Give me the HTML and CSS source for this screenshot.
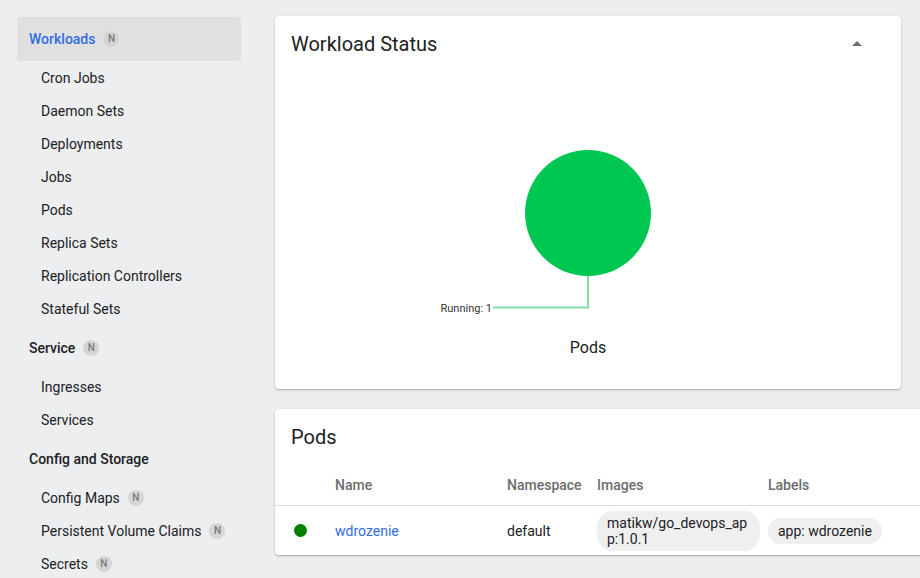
FILE: index.html
```html
<!DOCTYPE html>
<html>
<head>
<meta charset="utf-8">
<link rel="stylesheet" href="styles.css">
</head>
<body>
<div class="app">
  <nav class="sidebar">
    <div class="nav-header active"><span>Workloads</span><span class="badge">N</span></div>
    <div class="nav-item">Cron Jobs</div>
    <div class="nav-item">Daemon Sets</div>
    <div class="nav-item">Deployments</div>
    <div class="nav-item">Jobs</div>
    <div class="nav-item">Pods</div>
    <div class="nav-item">Replica Sets</div>
    <div class="nav-item">Replication Controllers</div>
    <div class="nav-item">Stateful Sets</div>
    <div class="nav-header group"><span>Service</span><span class="badge">N</span></div>
    <div class="nav-item">Ingresses</div>
    <div class="nav-item">Services</div>
    <div class="nav-header group"><span>Config and Storage</span></div>
    <div class="nav-item"><span>Config Maps</span><span class="badge">N</span></div>
    <div class="nav-item"><span>Persistent Volume Claims</span><span class="badge">N</span></div>
    <div class="nav-item"><span>Secrets</span><span class="badge">N</span></div>
  </nav>
  <main class="main">
    <section class="card status-card">
      <div class="card-header">
        <h2 class="card-title">Workload Status</h2>
        <svg class="caret" width="24" height="24" viewBox="0 0 24 24"><path d="M7 14l5-5 5 5z" fill="#6f6f6f"/></svg>
      </div>
      <svg class="chart" width="626" height="317" viewBox="0 0 626 317">
        <circle cx="313" cy="141" r="63" fill="#00c752"/>
        <polyline points="313,204 313,235.5 218,235.5" fill="none" stroke="#80e0a8" stroke-width="2"/>
        <text x="217" y="240" text-anchor="end" class="chart-label">Running: 1</text>
        <text x="313" y="281" text-anchor="middle" class="chart-title">Pods</text>
      </svg>
    </section>
    <section class="card pods-card">
      <div class="card-header">
        <h2 class="card-title">Pods</h2>
      </div>
      <div class="table">
        <div class="row head">
          <div class="c-status"></div>
          <div class="c-name">Name</div>
          <div class="c-ns">Namespace</div>
          <div class="c-img">Images</div>
          <div class="c-lbl">Labels</div>
        </div>
        <div class="row body">
          <div class="c-status"><span class="dot"></span></div>
          <div class="c-name"><a class="link">wdrozenie</a></div>
          <div class="c-ns">default</div>
          <div class="c-img"><span class="chip chip-wrap">matikw/go_devops_app:1.0.1</span></div>
          <div class="c-lbl"><span class="chip">app: wdrozenie</span></div>
        </div>
      </div>
    </section>
  </main>
</div>
</body>
</html>
```

FILE: styles.css
```css
* { box-sizing: border-box; }
html, body { margin: 0; padding: 0; }
body {
  width: 920px;
  height: 578px;
  overflow: hidden;
  background: #edeef0;
  font-family: Roboto, "Noto Sans", sans-serif;
  color: #202124;
  font-size: 14px;
}
.app { display: flex; align-items: flex-start; width: 920px; height: 578px; overflow: hidden; }
.sidebar {
  width: 241px;
  padding: 17px 0 0 17px;
  flex: none;
  display: flex;
  flex-direction: column;
}
.nav-header {
  height: 44px;
  display: flex;
  align-items: center;
  padding-left: 12px;
  font-weight: 500;
  font-size: 14px;
  color: #202124;
  border-radius: 3px;
}
.nav-header.group { margin-top: 1px; }
.nav-header.active { background: #e0e0e0; color: #326de6; }
.nav-item {
  height: 33px;
  display: flex;
  align-items: center;
  padding-left: 24px;
  font-size: 14px;
  color: #202124;
}
.badge {
  margin-left: 8px;
  width: 16px;
  height: 16px;
  border-radius: 50%;
  background: #d5d5d5;
  color: #7a7a7a;
  font-size: 10px;
  font-weight: 500;
  display: inline-flex;
  align-items: center;
  justify-content: center;
  line-height: 1;
}
.main {
  width: 679px;
  flex: none;
  overflow: hidden;
  padding: 16px 0 8px 34px;
  display: flex;
  flex-direction: column;
  gap: 20px;
}
.card {
  background: #fff;
  border-radius: 4px;
  box-shadow: 0 1px 3px rgba(0,0,0,0.2), 0 1px 1px rgba(0,0,0,0.12);
}
.status-card { width: 626px; height: 373px; flex: none; }
.pods-card { width: 700px; flex: none; }
.card-header {
  height: 56px;
  display: flex;
  align-items: center;
  justify-content: space-between;
  padding: 0 32px 0 16px;
}
.card-title {
  margin: 0;
  font-size: 20px;
  font-weight: 400;
  color: #212121;
}
.caret { display: block; }
.chart { display: block; }
.chart-label { font-family: Roboto, sans-serif; font-size: 11px; fill: #333; }
.chart-title { font-family: Roboto, sans-serif; font-size: 16px; fill: #212121; }
.table { display: flex; flex-direction: column; }
.row { display: flex; align-items: center; }
.row.head {
  height: 41px;
  border-bottom: 1px solid #dcdcdc;
  color: #6d6d6d;
  font-weight: 500;
}
.row.body { height: 49px; }
.c-status { width: 60px; padding-left: 19px; display: flex; align-items: center; }
.c-name { width: 172px; }
.c-ns { width: 90px; }
.c-img { width: 171px; }
.c-lbl { width: 200px; }
.dot {
  width: 13px;
  height: 13px;
  border-radius: 50%;
  background: #008000;
  display: block;
}
.link { color: #326de6; text-decoration: none; }
.chip {
  display: inline-block;
  background: #efefef;
  border-radius: 14px;
  padding: 5px 10px;
  line-height: 16px;
  color: #202124;
}
.chip-wrap {
  width: 163px;
  word-break: break-all;
  border-radius: 16px;
  padding: 4px 10px;
}
```
